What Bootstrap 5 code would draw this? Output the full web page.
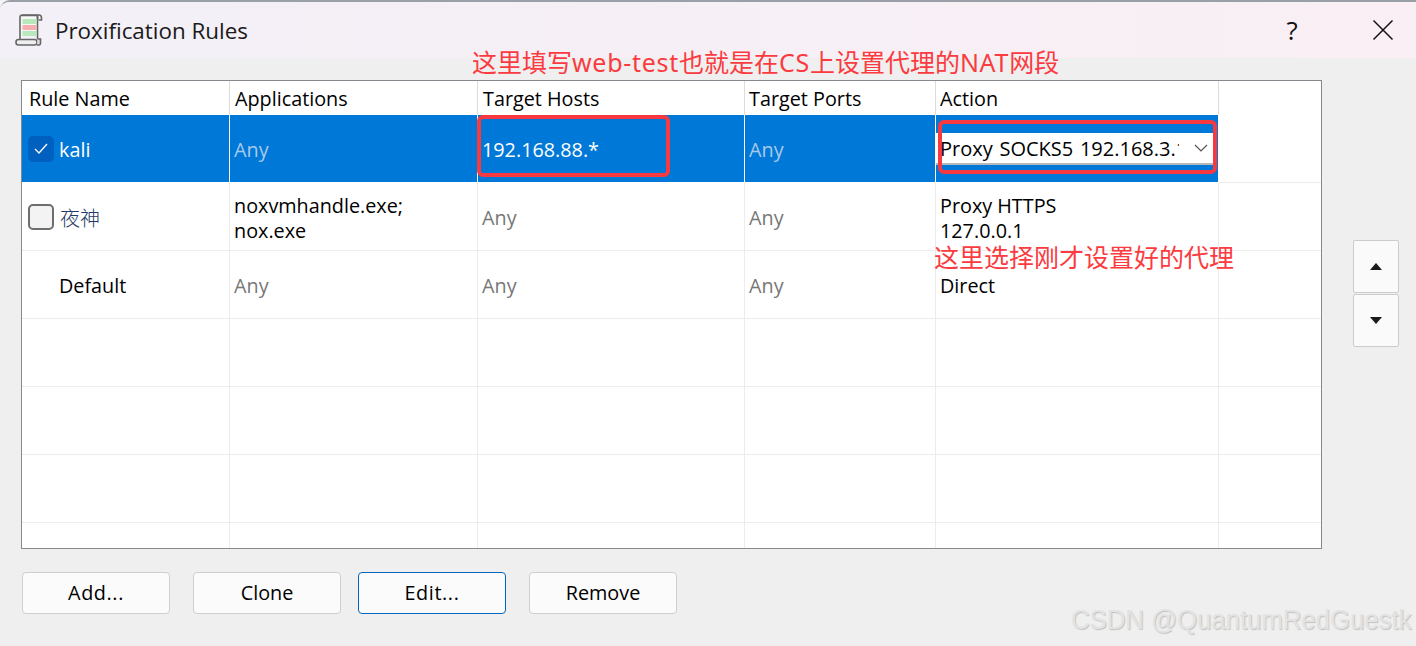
<!DOCTYPE html>
<html lang="zh">
<head>
<meta charset="utf-8">
<title>Proxification Rules</title>
<link href="https://cdn.jsdelivr.net/npm/bootstrap@5.3.0/dist/css/bootstrap.min.css" rel="stylesheet">
<style>
html,body{height:100%;}
body{background:#f4f4f6;overflow:hidden;font-family:"Open Sans","Noto Sans CJK SC",sans-serif;font-size:19.8px;color:#000;}
.win{position:relative;width:1416px;height:646px;background:#efefef;border-top:2px solid #9aa0a8;border-top-left-radius:10px;overflow:hidden;}
.tbar{height:56px;background:linear-gradient(90deg,#f3f0f7,#f9eff4);padding-left:15px;}
.tbar-title{font-size:22.4px;margin-left:12px;margin-top:1px;color:#1a1a1a;}
.help{font-size:26px;width:22px;text-align:center;margin-right:69px;color:#111;line-height:1;}
.closer{margin-right:22px;}
.content{padding:22px 17px 0 21px;}
.gridbox{width:1301px;height:469px;border:1px solid #85888c;background:#fff;overflow:hidden;}
.rules{table-layout:fixed;width:1299px;border-collapse:separate;border-spacing:0;}
.rules th,.rules td{font-weight:400;padding:0 0 0 5px;vertical-align:middle;border-right:1px solid #ececec;border-bottom:1px solid #ececec;line-height:25px;white-space:nowrap;overflow:hidden;}
.rules td{padding:2px 0 0 4px;}
.rules th{height:34px;border-bottom:0;border-right-color:#dcdcdc;}
.rules th:nth-child(n+4){padding-left:4px;}
.rules td{height:68px;}
.rules th:last-child,.rules td:last-child{border-right:0;}
.rules th:first-child{padding-left:7px;}
.any{color:#777;}
.rules tr.sel td{background:#0078d7;color:#fff;border-right-color:#fff;border-bottom-color:#fff;height:68px;}
.rules tr.sel td:last-child{background:#fff;border-bottom-color:#ececec;}
.rules tr.sel .any{color:#a9c9ea;}
.rules td.nm{padding-left:6px;}
.chk{width:26px;height:26px;border-radius:5px;margin-right:5px;margin-top:-2px;flex:none;}
.chk-on{background:#0060c0;}
.chk-off{background:#f3f3f3;border:2px solid #6e6e6e;}
.chk-none{background:transparent;}
.cjk{font-family:"Noto Sans CJK SC",sans-serif;font-weight:300;color:#1f3a66;font-size:20px;margin-left:1px;}
.rules td.combo-cell{padding:0;}
.combo{height:32px;margin:0 2px 0 0;background:#fff;border-bottom:2px solid #b8b8b8;color:#000;padding-left:4px;}
.combo-text{width:239px;overflow:hidden;white-space:nowrap;font-size:20px;word-spacing:1.500px;padding-top:1px;}
.annot{position:absolute;color:#fb3b3f;font-family:"Noto Sans","Noto Sans CJK SC",sans-serif;font-size:25px;line-height:30px;white-space:nowrap;}
.lat{letter-spacing:.7px;}
.a1{left:472px;top:45px;}
.a2{left:934px;top:240px;}
.redbox{position:absolute;border:4px solid #f83a40;border-radius:6px;}
.r1{left:477px;top:113px;width:193px;height:62px;}
.r2{left:938px;top:118px;width:279px;height:54px;}
.sidebtns{margin-top:160px;gap:1px;margin-left:31px;}
.sbtn{width:46px;height:53px;background:#fafafa;border:1px solid #ccc;border-radius:2px;padding:0;}
.sbtn:hover{background:#fafafa;border-color:#ccc;}
.foot{padding:23px 0 0 22px;}
.wbtn{width:148px;height:42px;background:#fbfbfb;border:1px solid #cfcfcf;border-radius:4px;font-size:19.8px;color:#000;padding:0;line-height:1;}
.wbtn:hover{background:#fbfbfb;border-color:#cfcfcf;color:#000;}
.wbtn.focused,.wbtn.focused:hover{border-color:#0067c0;}
.wide{letter-spacing:.6px;}
.gap-a{margin-left:23px;}
.gap-b{margin-left:17px;}
.mark-w{position:absolute;left:1071px;top:601px;font-family:"Liberation Sans",sans-serif;font-size:27px;line-height:34px;color:#e3e3e3;text-shadow:1px 1px 1px #c2c2c2;white-space:nowrap;transform:scaleX(.952);transform-origin:left center;}
</style>
</head>
<body>
<div class="win">
  <div class="tbar d-flex align-items-center">
    <svg width="28" height="34" viewBox="0 0 28 34" fill="none">
      <path d="M5 28V4.500Q5 2 7.500 2H24Q26.500 2 26.500 5V7H23.500" stroke="#666" stroke-width="1.600" fill="#f4f7f2"/>
      <path d="M7 2.500H22.500V26" stroke="#666" stroke-width="1.600" fill="#f7faf6"/>
      <path d="M22.500 3V6" stroke="#666" stroke-width="1.600"/>
      <rect x="7.500" y="6" width="14" height="5" fill="#b9e8bc"/>
      <rect x="7.500" y="12" width="14" height="5" fill="#f6aeb0"/>
      <rect x="7.500" y="18" width="14" height="5" fill="#b9e8bc"/>
      <rect x="1" y="26.500" width="21" height="5.500" rx="2.500" fill="#eee" stroke="#666" stroke-width="1.600"/>
      <path d="M22 32H24.500Q25.500 32 25.500 30V26H22.500" stroke="#666" stroke-width="1.600" fill="#ddd"/>
    </svg>
    <span class="tbar-title">Proxification Rules</span>
    <span class="help ms-auto">?</span>
    <svg class="closer" width="22" height="22" viewBox="0 0 22 22"><path d="M1.500 1.500L20.500 20.500M20.500 1.500L1.500 20.500" stroke="#111" stroke-width="1.500"/></svg>
  </div>
  <div class="content d-flex">
    <div class="gridbox flex-none">
      <table class="rules">
        <colgroup><col style="width:208px"><col style="width:248px"><col style="width:267px"><col style="width:191px"><col style="width:283px"><col style="width:102px"></colgroup>
        <tr><th>Rule Name</th><th>Applications</th><th>Target Hosts</th><th>Target Ports</th><th>Action</th><th></th></tr>
        <tr class="sel">
          <td class="nm"><div class="d-flex align-items-center"><span class="chk chk-on d-flex align-items-center justify-content-center"><svg width="14" height="11" viewBox="0 0 14 11"><path d="M1 6L5 10L13 1" stroke="#fff" stroke-width="1.300" fill="none"/></svg></span>kali</div></td>
          <td class="any">Any</td><td>192.168.88.*</td><td class="any">Any</td>
          <td class="combo-cell"><div class="combo d-flex align-items-center justify-content-between"><span class="combo-text">Proxy SOCKS5 192.168.3.1</span><svg class="me-2" width="14" height="8" viewBox="0 0 14 8"><path d="M1 1L7 7L13 1" stroke="#555" stroke-width="1.200" fill="none"/></svg></div></td>
          <td></td>
        </tr>
        <tr>
          <td class="nm"><div class="d-flex align-items-center"><span class="chk chk-off"></span><span class="cjk">夜神</span></div></td>
          <td>noxvmhandle.exe;<br>nox.exe</td><td class="any">Any</td><td class="any">Any</td><td>Proxy HTTPS<br>127.0.0.1</td><td></td>
        </tr>
        <tr>
          <td class="nm"><div class="d-flex align-items-center"><span class="chk chk-none"></span>Default</div></td>
          <td class="any">Any</td><td class="any">Any</td><td class="any">Any</td><td>Direct</td><td></td>
        </tr>
        <tr><td></td><td></td><td></td><td></td><td></td><td></td></tr>
        <tr><td></td><td></td><td></td><td></td><td></td><td></td></tr>
        <tr><td></td><td></td><td></td><td></td><td></td><td></td></tr>
        <tr><td></td><td></td><td></td><td></td><td></td><td></td></tr>
      </table>
    </div>
    <div class="sidebtns d-flex flex-column">
      <button class="btn sbtn d-flex align-items-center justify-content-center" type="button" aria-label="Up"><svg width="12" height="7" viewBox="0 0 12 7"><path d="M6 0L12 7H0Z" fill="#1a1a1a"/></svg></button>
      <button class="btn sbtn d-flex align-items-center justify-content-center" type="button" aria-label="Down"><svg width="12" height="7" viewBox="0 0 12 7"><path d="M0 0H12L6 7Z" fill="#1a1a1a"/></svg></button>
    </div>
  </div>
  <div class="foot d-flex">
    <button class="btn wbtn" type="button"><span class="wide">Add...</span></button>
    <button class="btn wbtn gap-a" type="button">Clone</button>
    <button class="btn wbtn focused gap-b" type="button"><span class="wide">Edit...</span></button>
    <button class="btn wbtn gap-a" type="button">Remove</button>
  </div>
  <div class="annot a1">这里填写<span class="lat">web-test</span>也就是在<span class="lat">CS</span>上设置代理的<span class="lat">NAT</span>网段</div>
  <div class="annot a2">这里选择刚才设置好的代理</div>
  <div class="redbox r1"></div>
  <div class="redbox r2"></div>
  <div class="mark-w">CSDN @QuantumRedGuestk</div>
</div>
<script src="https://cdn.jsdelivr.net/npm/bootstrap@5.3.0/dist/js/bootstrap.bundle.min.js"></script>
</body>
</html>
